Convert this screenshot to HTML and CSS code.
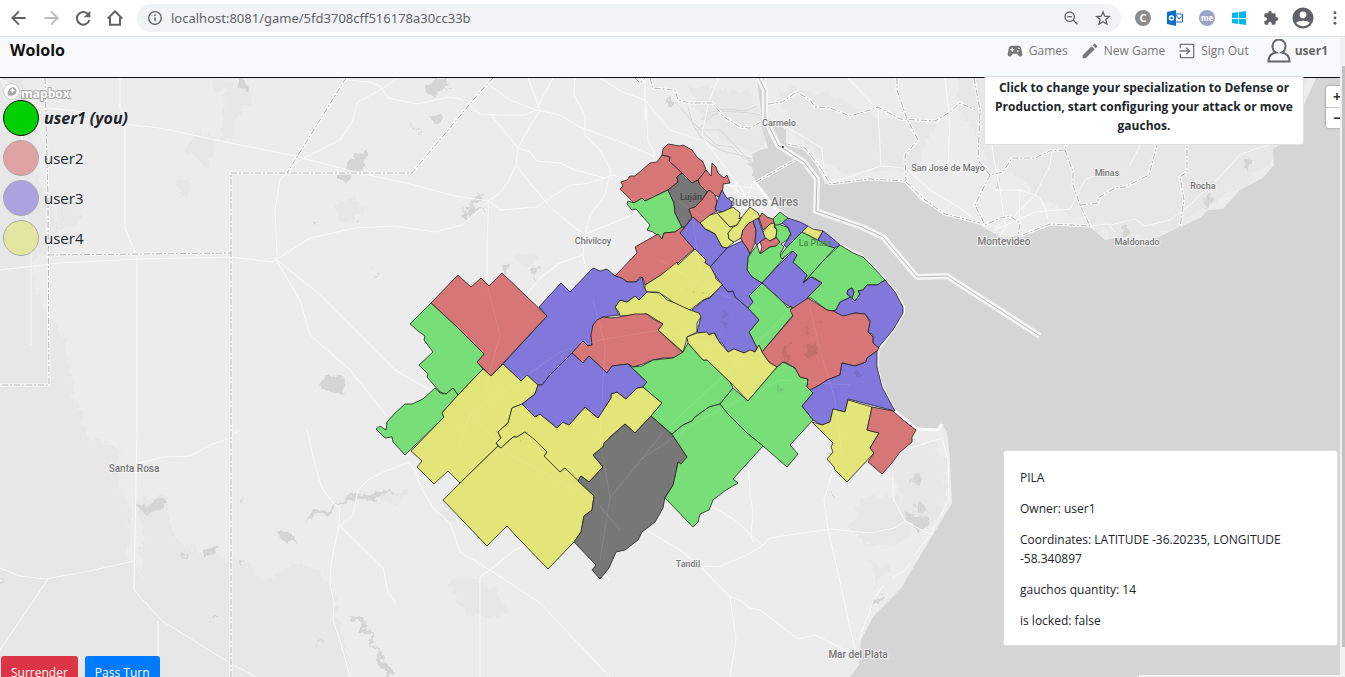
FILE: index.html
```html
<!DOCTYPE html>
<html lang="en">
<head>
<meta charset="utf-8">
<meta name="viewport" content="width=device-width, initial-scale=1">
<title>Wololo</title>
<link rel="stylesheet" href="styles.css">
</head>
<body>
<header class="toolbar">
  <div class="tool-group">
    <button class="tool" aria-label="Back"><svg viewBox="0 0 24 24"><path d="M22 12H3M12 2L2 12l10 10"/></svg></button>
    <button class="tool tool-off" aria-label="Forward"><svg viewBox="0 0 24 24"><path d="M2 12h19M12 2l10 10-10 10"/></svg></button>
    <button class="tool" aria-label="Reload"><svg viewBox="0 0 24 24"><path d="M20 7a9.500 9.500 0 1 0 1.500 8"/><path class="solid" d="M23 1v10H13z"/></svg></button>
    <button class="tool" aria-label="Home"><svg viewBox="0 0 24 24"><path d="M1 13L12 2l11 11M4.500 11v11h15V11"/></svg></button>
  </div>
  <div class="address">
    <svg class="glyph" viewBox="0 0 24 24"><circle cx="12" cy="12" r="9.500"/><path d="M12 11v6M12 6.500v2.500"/></svg>
    <input class="url" type="text" aria-label="Address" value="localhost:8081/game/5fd3708cff516178a30cc33b">
    <button class="tool" aria-label="Zoom"><svg class="glyph" viewBox="0 0 24 24"><circle cx="10" cy="10" r="7"/><path d="M15.500 15.500L21.500 21.500M6.500 10h7"/></svg></button>
    <button class="tool" aria-label="Bookmark"><svg class="glyph" viewBox="0 0 24 24"><path d="M12 3l2.600 6.300 6.900.6-5.200 4.500 1.600 6.800L12 17.600l-5.900 3.600 1.600-6.800L2.500 9.900l6.900-.6z"/></svg></button>
  </div>
  <div class="tool-group tool-end">
    <button class="badge badge-grey" aria-label="C extension">C</button>
    <button class="tool" aria-label="Outlook"><svg viewBox="0 0 16 16"><path fill="#0f6fc6" stroke="none" d="M0 2l9-2v16l-9-2z"/><path fill="#fff" stroke="#0f6fc6" stroke-width="1" d="M9 4h6.500v8H9M9 5l3 4 3.500-4"/><circle cx="4.500" cy="8" r="2" fill="none" stroke="#fff" stroke-width="1.500"/></svg></button>
    <button class="badge badge-lilac" aria-label="me extension">me</button>
    <button class="tool" aria-label="Windows"><svg viewBox="0 0 16 16"><path fill="#00b8f1" stroke="none" d="M1 3l6-1v6H1zM8 2l7-1v7H8zM1 9h6v5l-6-1zM8 9h7v6l-7-1z"/></svg></button>
    <button class="tool" aria-label="Extensions"><svg viewBox="0 0 24 24"><path class="solid" d="M20.500 11H19V7a2 2 0 0 0-2-2h-4V3.500a2.500 2.500 0 0 0-5 0V5H4a2 2 0 0 0-2 2v3.800h1.500a2.700 2.700 0 0 1 0 5.400H2V20a2 2 0 0 0 2 2h3.800v-1.500a2.700 2.700 0 0 1 5.400 0V22H17a2 2 0 0 0 2-2v-4h1.500a2.500 2.500 0 0 0 0-5z"/></svg></button>
    <button class="tool tool-user" aria-label="Profile"><svg viewBox="0 0 24 24"><circle class="solid" cx="12" cy="12" r="11.500"/><circle cx="12" cy="8.500" r="3.700" fill="#fff" stroke="none"/><path d="M4.500 17.500c2-3.500 13-3.500 15 0-3.500 4.500-11.500 4.500-15 0z" fill="#fff" stroke="none"/></svg></button>
    <button class="tool" aria-label="Menu"><svg viewBox="0 0 24 24"><g class="solid"><circle cx="12" cy="4" r="2.200"/><circle cx="12" cy="12" r="2.200"/><circle cx="12" cy="20" r="2.200"/></g></svg></button>
  </div>
</header>

<div class="window">
<div class="page">
  <nav class="navbar">
    <a class="brand" href="#">Wololo</a>
    <div class="links">
      <a class="link" href="#games"><svg viewBox="0 0 24 24"><path fill="currentColor" fill-rule="evenodd" d="M7 4h10c3 0 4 2 4.500 4.500l1.400 8c.6 3.500-2.900 5-5.400 2.500L15 16H9l-2.500 3c-2.500 2.500-6 1-5.400-2.500l1.400-8C3 6 4 4 7 4zm0 3v2H5v2h2v2h2v-2h2V9H9V7zm8 4v2h2v-2zm2-4v2h2V7z"/></svg>Games</a>
      <a class="link" href="#new"><svg viewBox="0 0 24 24"><path fill="currentColor" d="M1 18.500L14.500 5l4.500 4.500L5.500 23H1zM16 3.500l2-2q1-1 2 0l2.500 2.500q1 1 0 2l-2 2z"/></svg>New Game</a>
      <a class="link" href="#out"><svg viewBox="0 0 24 24"><path fill="none" stroke="currentColor" stroke-width="2" d="M2 8V2h20v20H2v-6M1 12h15M11 7l5 5-5 5"/></svg>Sign Out</a>
      <a class="link link-user" href="#user"><svg viewBox="0 0 24 24"><path fill="none" stroke="currentColor" stroke-width="2" d="M9 13.500C6 12 5.500 9 5.500 7a6.500 6.500 0 0 1 13 0c0 2-.5 5-3.500 6.500 5 1 7.500 4 7.500 9h-21c0-5 2.500-8 7.500-9z"/></svg><b>user1</b></a>
    </div>
  </nav>

  <main class="game">
    <svg class="map" viewBox="0 78 1340 599" preserveAspectRatio="xMinYMin slice" role="img" aria-label="Game map">
      <defs>
        <path id="east-border" d="M759 78L765 90 765 118 778 145 804 162 817 179 816 211 862 227 883 237 917 277 947 276 1040 336"/>
        <path id="province-limits" d="M231 677V173H412L480 92 493 78M346 78L287 173M45 78L48 200 49 385H0M48 255L231 253M635 78L640 83 645 78M650 78L653 88 675 90 678 100 690 103 712 103 724 117 740 127 750 128 765 120M756 182L795 160M768 104L782 102 797 92 810 100 815 107 830 108 850 116 870 110 878 107 900 119 935 121 950 112 960 103 975 110M897 78V90L907 119 918 140 905 155 906 181 870 179 830 184 822 170 805 148 787 144M974 78L980 110 978 160 984 168 990 175 1003 172 1012 158 1035 158 1050 151 1065 150 1070 130 1078 78M990 175L975 205 985 225 1000 218 1010 216 1020 223 1018 236M1065 150L1073 172 1073 185 1080 205 1090 226 1050 224 1020 236M1080 205L1098 203 1098 198 1115 188 1125 187 1149 175 1157 145 1160 78M1187 78V172L1180 177 1184 200 1180 227M906 182L925 200 945 214 980 223"/>
        <filter id="rough" x="0" y="0" width="100%" height="100%" color-interpolation-filters="sRGB">
          <feTurbulence type="fractalNoise" baseFrequency="0.09" numOctaves="3" seed="4"/>
          <feDisplacementMap in="SourceGraphic" scale="16" xChannelSelector="R" yChannelSelector="G"/>
        </filter>
      </defs>
      <rect class="land" x="0" y="78" width="1340" height="599"/>
      <g class="shade" filter="url(#rough)">
        <path d="M-20 60H20L35 110 30 160 45 200 60 225 55 250 30 260 40 300 65 340 75 400 85 435 120 450 118 480 130 510 128 560 150 590 165 620 160 640 170 700H-20z"/>
        <path d="M140 500l25-8 8 40 22 20 50 10 20 20 35-20 30 20 15 60 10 80H150z"/>
        <path d="M224 90l26-8 0 20-12 11-5 30-12 0zM195 130l20 6 0 20-8 10-20-15zM336 205l20-6 10 14-25 10zM178 180h12v18h-12zM60 205l20-6 0 25-20 4zM215 80h18v12h-18zM515 255l20-4 5 10-18 4z"/>
        <path d="M860 500l30-6 25 12 5 14-25 25-30 0-15-20zM895 450l40-10 10 20 0 50-20 20-20-25-15-30zM870 565h20l-16 22z"/>
        <path d="M780 88l60 10 40 20 25-5 30 15-20 40-60 5-30-10-30-30zM960 60H1313L1265 170 1210 205 1150 240 1110 236 1085 220 1040 200 1010 170 990 170 960 110z"/>
        <path d="M690 85l60 8 20 40-10 20-35-10-30-35zM450 580l15-6 30 18 14 18-30 8-20-10zM438 500l14 4 4 20-16-6zM385 490l22 2-8 14-16-4z"/>
      </g>
      <g filter="url(#rough)"><path class="lagoon" d="M349 158l6-6 13 1-2 12-8 8-14 7-10 0 3-5 10-3zM428 85q5-9 18-5l-3 12-13 2zM430 113l8 1 1 7-7 0zM240 82l8-1 2 8-9-1zM411 122l4 4 8 9-6-3zM463 215l8-10 7-14 2 6-5 8 10 7-10-2-8 10zM320 380l18-6 8 5-4 14-12 3-8-6zM276 532l9-2 11 8-1 7-14-6zM303 525l7-10 16-6 15-7 25-9 28-4-16 10-25 1-14 5-14 10-18 5zM206 552l8-5 4 4-10 5zM180 557l12-4-10 6zM140 507l12-8 16 2-4 8-20 4zM318 640l8 1-4 2-7-1zM350 613l15 8 8 20 10 15 12 21h-11l-9-30-15-20zM0 580l10 1-5 2zM208 620l8-4-5 6zM372 278l6-6-1 5-5 3zM502 266l6-2 1 6-6 0zM530 268l8 2-2 8-6-3zM445 88l4 0-2 2zM356 222l8-2-5 4zM312 220l6-2-2 4zM912 477l10-2-2 7-7 1zM918 502l8 4 2 10-9-4zM905 514l8-2 13 9-2 10-10-3-8-10zM834 490l3 2 1 4-4-1zM874 602l8-8-5 14-4 4zM1243 162l7-2 2 10-5 2zM1202 205l8-10 4-3-2 11-6 4zM1120 231l8-8 2 6-5 5zM994 185l6-8 2 4-6 8zM665 100l8-2 0 4-6 0zM240 500l4-2-2 4zM238 560l4-2 0 8z"/></g>
      <path class="water" d="M757 78L761 112 762 128 767 145 770 150 764 156 758 166 754 181 765 195 775 208 788 218 813 229 840 245 863 257 885 280 895 292 904 307 903 314 893 330 878 349 877 368 882 387 895 411 916 429 938 430 942 424 947 432 950 460 952 503 910 573 902 587 873 617 861 640 859 665 850 677H1340V78H1316L1304 105 1280 144 1273 150 1274 165 1263 178 1240 190 1223 209 1208 210 1200 218 1180 227 1152 240 1133 247 1118 237 1105 240 1090 227 1050 225 1020 236 1003 238 983 227 970 219 947 215 933 207 920 200 903 181 865 180 827 184 822 177 814 159 797 145 786 143 786 130 775 122 767 118 764 78z"/>
      <path class="lagoon" d="M770 148l-10 2-8 4 2 8-8 2 8 4-2 8 6 0 20-22z"/>
      <path class="delta" d="M757 106l-12 5-20-2-14 3-10 8M760 115l-10-2-25-2-12 4-14 14M750 162l-20-22-10-10-18 0-10-8-4-15M764 157l-20 2-12-12-16-2-8-8-15-14M755 178l-5-20-30-8-20-14-12-20-13-14"/>
      <g class="roads">
        <path d="M0 78L35 105 48 108 85 112 122 124 160 128 230 143 290 155 360 173 410 184 455 196 489 201 500 210 537 207 545 201 570 185 585 184 605 178 612 175 650 184"/>
        <path d="M120 78L120 108 125 117 125 228 137 257 137 430 134 590 162 621 230 663 256 677M0 78L22 119 23 190 31 250 31 345"/>
        <path d="M0 270L60 263 140 259 232 257 272 262 310 238 355 228 395 226 435 232 462 225 480 210 489 200M277 255L275 210 280 180 300 160 340 140 352 122 358 102 380 90 398 78M345 80L370 82 380 86 388 98 417 104 450 97 460 99 480 114 500 115 525 115 536 110 560 115 580 127 615 140 640 150 655 157M275 258L320 295 370 345 395 370 430 390M275 258L300 300 310 335 350 370 390 420 408 455M0 568L20 576 45 579 85 572 134 561M48 579L0 650M158 621L158 677M136 464L163 457 190 456 210 445 225 440 240 430"/>
        <path d="M307 430L315 465 322 488 332 502 340 508 339 525 334 548 331 565 330 585 334 602 333 620 340 640 350 677M340 526L353 515 358 490 368 480 383 472 400 466 408 462 415 470 420 485 433 508 450 523 460 552 490 570 540 603 610 677M340 526L383 568 388 592 396 603M490 570L515 550 545 537 565 518 595 500 610 498M490 570L480 577V677M595 500L680 550 700 566 730 597 740 600 750 608 760 610 798 639 815 635 845 650 856 653M610 498L604 570 609 580M489 200L487 240 487 285M528 78L540 110 529 128 518 148 516 165 508 182 498 195 489 200M490 85L510 100 536 110 553 78M491 115L518 148 530 152 537 161 560 163 575 170 605 178M516 165L530 183 550 207 575 228 585 234M575 78L574 95 585 115 585 135 600 150 611 170 605 195 590 215 585 234 583 255 560 263 540 278 525 296M600 78L622 92 645 100 670 130 700 140 715 150"/>
        <path d="M700 566L718 567 745 556 762 546 770 538 830 529 870 533 895 528 905 521 925 532 933 534M860 640L863 628 870 612 873 600 884 585M892 578L905 570 911 563M833 470L824 500 828 530 834 555 855 650M748 450L750 495 753 510 751 537 754 542M763 546L735 520 710 505M893 470L893 498 905 521M906 450L920 445 942 438 948 460 949 500 930 535 915 555M730 597L736 640 730 677M645 78L645 120"/>
        <path d="M718 78L708 105 702 135 712 150 745 195M646 105L648 140 655 155M585 234L620 220 650 207M593 300L583 255M848 78L878 110 881 166M945 78L950 120 948 165M775 120L800 135 822 148 825 184M828 184L881 166 905 168M908 170L930 190 960 208 983 225M995 190H1020L1040 197 1046 210 1048 220M990 115L993 155 1000 190 1005 225M1020 190L1019 230M995 230L1035 212 1070 209 1085 180 1108 170M1130 165L1140 145M1110 225L1135 219 1145 226 1170 220 1190 205 1205 190M1215 182L1240 155 1255 149 1270 145M995 228L1010 216M1000 235L1015 215 1035 195 1050 165 1052 150M1090 226L1108 224 1115 232"/>
        <path d="M730 210L770 205M735 192L765 212M742 188L748 208M752 184L745 205M725 185L755 188M720 178L750 200M735 180L740 205"/>
      </g>
      <path class="coast" d="M754 181L765 195 775 208 788 218 813 229 840 245 863 257 885 280 895 292 904 307 903 314 893 330 878 349 877 368 882 387 895 411 916 429 938 430 942 424"/>
      <use class="casing" href="#east-border"/>
      <use class="center" href="#east-border"/>
      <use class="limit-halo" href="#province-limits"/>
      <use class="limit" href="#province-limits"/>
      <g class="towns">
        <text x="779" y="126">Carmelo</text>
        <text x="948" y="171">San José de Mayo</text>
        <text x="1107" y="176">Minas</text>
        <text x="1203" y="189">Rocha</text>
        <text x="1137" y="245">Maldonado</text>
        <text x="593" y="244">Chivilcoy</text>
        <text x="688" y="567">Tandil</text>
        <text class="city" x="1004" y="245">Montevideo</text>
        <text class="city" x="134" y="472">Santa Rosa</text>
        <text class="city" x="858" y="658">Mar del Plata</text>
        <text class="capital" x="763" y="206">Buenos Aires</text>
      </g>
      <g class="regions">
        <path class="red" d="M662 155L663 149 668 144 680 146 683 145 692 150 697 157 703 162 706 170 703 174 698 180 692 183 682 173 669 161 670 157z"/>
        <path class="red" d="M662 155L657 162 650 163 642 170 635 176 630 176 627 180 621 182 623 186 620 189 634 203 642 198 645 201 668 190 678 182 677 177 682 173 669 161 670 157z"/>
        <path class="green" d="M634 203L628 201 627 204 632 210 636 209 650 225 647 230 653 232 662 239 664 233 675 232 682 227 675 213 674 203 668 190 645 201 642 198z"/>
        <path class="grey" d="M682 173L692 183 698 180 700 185 707 192 702 200 695 207 689 209 692 217 685 227 682 227 675 213 674 203 668 190 678 182 677 177z"/>
        <path class="red" d="M706 170L711 176 712 163 716 167 718 173 724 178 727 175 730 183 723 184 723 188 719 197 715 195 709 190 707 192 700 185 698 180 703 174z"/>
        <path class="red" d="M709 190L715 195 717 202 715 208 717 211 710 215 704 222 700 223 692 217 689 209 695 207 702 200z"/>
        <path class="purple" d="M722 190L726 197 732 202 731 208 722 212 715 210 717 202 719 197z"/>
        <path class="yellow" d="M717 213L730 227 737 225 728 233 729 239 734 242 727 248 722 247 717 238 715 234 710 231 705 229 700 223 710 215z"/>
        <path class="yellow" d="M717 213L722 212 733 207 740 213 739 219 742 217 737 225 730 227z"/>
        <path class="yellow" d="M750 207L758 213 760 217 753 222 749 223 743 230 741 238 734 242 729 239 728 233 733 227 737 225 742 217z"/>
        <path class="red" d="M753 221L756 230 755 243 750 254 747 248 743 243 741 238 743 230 749 223z"/>
        <path class="purple" d="M753 221L758 218 762 230 766 238 760 242 757 245 755 243 756 230z"/>
        <path class="red" d="M762 213L767 217 773 219 776 223 767 227 763 230 759 218z"/>
        <path class="yellow" d="M767 227L770 224 775 223 774 227 777 230 776 237 770 241 766 240 763 232z"/>
        <path class="red" d="M766 238L770 241 777 237 780 243 776 246 770 247 760 254 762 247 760 242z"/>
        <path class="green" d="M748 257L757 245 760 254 770 247 776 246 780 242 776 237 777 230 774 225 778 224 787 227 791 233 787 240 781 244 784 247 780 254 784 258 762 283 752 277 747 270z"/>
        <path class="green" d="M780 212L788 218 785 222 778 225 775 225 773 219z"/>
        <path class="purple" d="M788 218L800 222 808 226 797 237 787 248 784 245 791 235 788 227 782 223z"/>
        <path class="green" d="M802 232L818 240 835 248 823 261 808 278 803 283 807 275 793 262 797 255 792 251 782 259 780 256 787 247z"/>
        <path class="yellow" d="M808 226L813 229 823 231 820 236 818 240 802 232z"/>
        <path class="purple" d="M823 231L832 238 840 245 835 248 828 246 818 240z"/>
        <path class="green" d="M840 245L853 253 863 257 873 267 885 280 877 285 867 285 863 290 858 291 860 294 855 301 852 298 854 292 852 288 848 290 847 294 851 297 840 302 836 310 833 311 827 310 811 298 807 298 822 283 813 277 803 283 808 278 823 261z"/>
        <path class="purple" d="M885 280L895 292 903 307 903 313 893 330 878 348 873 343 873 335 868 332 870 320 865 314 855 313 843 317 833 311 836 310 840 302 851 297 847 294 848 290 852 288 854 292 852 298 855 301 860 294 858 291 863 290 867 285 877 285z"/>
        <path class="purple" d="M793 251L797 255 793 262 807 275 803 283 811 277 822 283 807 298 804 302 795 308 790 307 783 302 762 283 778 266z"/>
        <path class="green" d="M762 283L783 302 788 308 791 306 793 315 762 352 759 346 757 348 749 332 759 320 747 307 753 302 749 296z"/>
        <path class="purple" d="M742 241L747 248 750 254 748 257 747 270 752 277 762 283 749 296 753 302 748 308 735 297 733 291 728 292 722 285 715 275 710 267 727 248z"/>
        <path class="purple" d="M693 217L700 223 705 229 715 234 722 247 727 248 710 267 700 257 694 249 680 233z"/>
        <path class="red" d="M682 227L684 228 680 233 694 249 678 263 661 275 645 285 643 278 640 277 636 282 628 282 615 276 637 253 635 247 658 234 662 239 664 233 675 232z"/>
        <path class="yellow" d="M695 249L706 260 705 263 710 266 715 275 716 279 723 285 710 297 703 300 690 310 677 305 663 295 657 292 645 292 645 285 661 275 677 262 678 265z"/>
        <path class="purple" d="M722 285L728 292 733 291 735 297 748 308 759 320 749 332 757 348 755 352 750 350 744 353 734 349 728 352 722 343 719 343 715 333 707 335 697 332 701 317 692 310 704 300 710 298z"/>
        <path class="yellow" d="M647 292L660 293 667 300 675 303 690 310 699 313 701 317 697 323 697 332 687 337 686 342 683 352 658 330 663 324 647 314 635 315 620 316 619 312 615 307 620 300 627 302 635 296 639 300z"/>
        <path class="purple" d="M593 268L600 271 607 269 615 276 622 278 627 282 636 282 642 277 644 287 647 292 639 300 635 296 627 302 620 300 615 307 619 315 603 317 593 325 592 345 588 346 583 341 572 353 550 375 542 385 538 385 527 375 521 381 503 364 547 316 539 307 561 283 570 292z"/>
        <path class="red" d="M572 353L583 341 588 346 592 345 591 335 593 325 597 320 603 317 611 318 619 317 635 314 647 314 653 319 663 324 658 330 683 353 673 358 663 358 653 360 643 364 633 367 628 364 612 366 607 373 589 356 583 363z"/>
        <path class="red" d="M458 275L471 287 481 278 489 286 502 273 547 316 491 376 477 362 484 354 458 328 431 303z"/>
        <path class="green" d="M431 303L458 328 484 354 477 362 483 369 458 395 453 388 446 394 440 392 427 377 428 374 419 365 433 352 424 340 425 336 418 331 410 324z"/>
        <path class="green" d="M435 388L440 393 446 394 453 388 458 395 442 413 444 417 405 455 393 442 392 437 385 438 376 429 380 426 386 430 387 422 395 413 405 404 412 404 423 399z"/>
        <path class="yellow" d="M503 364L521 381 527 375 538 385 535 394 522 404 512 408 508 423 498 432 501 438 496 443 498 446 460 483 448 471 434 484 417 467 422 461 411 451 444 417 442 413 458 395 483 369 491 376z"/>
        <path class="yellow" d="M522 404L535 417 540 414 557 428 563 422 569 425 585 407 598 418 611 398 611 394 617 392 626 399 637 388 643 387 662 403 651 416 635 433 625 424 610 437 603 447 593 455 603 467 589 482 581 476 578 481 565 468 560 472 544 456 547 452 525 432 517 437 513 437 501 448 496 443 501 438 498 432 508 423 512 408z"/>
        <path class="purple" d="M572 353L583 363 589 356 607 373 612 366 628 364 647 382 643 387 637 388 626 399 617 392 611 394 611 398 598 418 585 407 569 425 563 422 557 428 540 414 535 417 522 404 535 394 538 385 542 385 550 375z"/>
        <path class="yellow" d="M525 432L535 440 547 452 544 456 560 472 565 468 594 496 592 510 584 516 581 532 574 542 548 569 517 537 507 526 487 546 443 500 460 483 498 446 501 448 513 437 517 437z"/>
        <path class="green" d="M628 364L633 367 642 366 653 360 673 358 683 352 688 343 703 360 707 360 730 382 733 388 720 404 709 407 695 417 692 421 683 425 672 434 651 416 662 403 643 387 647 382z"/>
        <path class="yellow" d="M687 337L697 333 707 332 709 335 714 333 720 343 728 352 734 349 744 353 750 350 755 352 759 345 762 352 769 362 777 367 748 401 731 383 707 360 703 360 688 343z"/>
        <path class="green" d="M733 388L748 401 777 367 783 362 795 368 800 377 808 379 807 387 813 393 802 406 813 420 790 445 798 454 787 467 763 446 747 433 727 413 720 404z"/>
        <path class="green" d="M720 404L727 413 747 433 763 446 733 479 738 483 726 490 713 500 709 510 700 514 698 522 693 527 665 498 673 485 678 462 687 457 677 442 672 434 683 425 692 421 695 417 709 407z"/>
        <path class="grey" d="M651 416L672 435 677 442 687 457 681 464 678 462 673 485 665 497 663 508 655 522 642 532 638 540 625 550 616 552 609 568 600 579 592 570 596 565 574 542 581 532 584 516 592 510 594 496 578 481 581 476 589 482 603 467 593 455 603 447 604 443 625 424 635 433z"/>
        <path class="red" d="M808 298L827 310 833 311 843 316 855 313 865 314 870 322 868 332 873 337 873 343 879 348 877 351 867 358 866 362 855 366 842 363 840 375 827 380 818 386 810 390 807 387 808 379 800 377 795 368 785 362 783 362 777 367 769 362 762 352 793 316 790 310z"/>
        <path class="purple" d="M877 351L877 367 882 387 888 398 895 411 848 399 845 412 833 409 830 422 822 425 818 423 813 420 802 406 813 393 810 390 818 386 827 380 840 375 842 363 855 366 866 362 867 358z"/>
        <path class="yellow" d="M848 400L872 407 867 430 879 433 870 448 874 453 860 468 847 482 835 470 834 467 827 459 833 452 831 447 833 443 812 422 822 425 830 422 833 409 845 412z"/>
        <path class="red" d="M872 407L893 411 903 420 916 430 912 437 912 442 900 452 892 463 882 474 868 462 874 453 870 448 879 433 867 430z"/>
      </g>
      <path class="region-lakes" filter="url(#rough)" d="M785 351l4-7 2 5-4 12-5 0zM804 350l6-9 2 5 6-8 0 16-8 5zM805 325l4 4-3 8zM817 320l5 2-2 6zM720 315l6-3-2 8-4 0zM722 322l8 2-4 6zM853 369l10 3-7 3zM776 387l8-2 0 4-6 2zM518 440l8-2-6 4zM686 290l5-2 0 4zM702 294l6 0-3 4zM542 359l6-2-2 4z"/>
      <g class="region-roads">
        <path d="M458 445L471 413 520 380 560 352 600 340 660 330 730 350M471 413L510 455 595 500 620 530M487 285L500 335 485 390M593 300L605 345 600 440 610 498 600 560M610 498L665 430 740 360 790 310M640 460L700 420 780 380 850 385M808 300L820 350 835 400 842 455M660 260L710 290 760 310M690 200L700 270M620 200L670 195 720 230"/>
      </g>
      <g class="inner-towns">
        <text x="691" y="200">Luján</text>
        <text class="muted" x="815" y="246">La Plata</text>
      </g>
      <circle cx="783" cy="147" r="1" fill="#333"/>
    </svg>

    <section class="legend" aria-label="Players">
      <div class="mapbox"><svg viewBox="0 0 18 18"><circle cx="9" cy="9" r="8" fill="#fff" stroke="#aaa" stroke-width="1"/><path fill="#aaa" d="M5 13c-1-8 7-11 9-6s-4 8-9 6z"/><path fill="#fff" d="M10 5l1 2 2 1-2 1-1 2-1-2-2-1 2-1z"/></svg><span>mapbox</span></div>
      <ul class="players">
        <li class="player player-me"><i class="dot dot-green"></i>user1 (you)</li>
        <li class="player"><i class="dot dot-red"></i>user2</li>
        <li class="player"><i class="dot dot-purple"></i>user3</li>
        <li class="player"><i class="dot dot-yellow"></i>user4</li>
      </ul>
    </section>

    <div class="zoomer"><button aria-label="Zoom in">+</button><button aria-label="Zoom out">−</button></div>
    <p class="notice">Click to change your specialization to Defense or Production, start configuring your attack or move gauchos.</p>

    <section class="details">
      <p>PILA</p>
      <p>Owner: user1</p>
      <p>Coordinates: LATITUDE -36.20235, LONGITUDE -58.340897</p>
      <p>gauchos quantity: 14</p>
      <p>is locked: false</p>
    </section>

    <div class="actions">
      <button class="btn btn-danger">Surrender</button>
      <button class="btn btn-primary">Pass Turn</button>
    </div>
  </main>
  <div class="bar-x"></div>
</div>
<div class="bar-y"><div class="thumb"></div></div>
</div>
</body>
</html>
```
FILE: styles.css
```css
* { box-sizing: border-box; }

body {
  margin: 0;
  height: 100vh;
  display: flex;
  flex-direction: column;
  overflow: hidden;
  font-family: "Open Sans", "Noto Sans", sans-serif;
  color: #212529;
}

button { font: inherit; border: 0; padding: 0; background: none; }

/* browser toolbar */
.toolbar {
  display: flex;
  align-items: center;
  height: 37px;
  padding: 0 2px 0 11px;
  border-bottom: 1px solid #dadce0;
  background: #fff;
}
.tool-group { display: flex; align-items: center; gap: 16px; }
.tool { display: flex; color: #5f6368; }
.tool svg, .glyph {
  width: 16px;
  height: 16px;
  fill: none;
  stroke: #5f6368;
  stroke-width: 3;
}
.tool .glyph, .glyph { stroke-width: 2; }
.tool-off svg { stroke: #babcbe; }
.solid { fill: #5f6368; stroke: none; }
.tool-user { margin: 0 -3px; }
.tool-user svg { width: 22px; height: 22px; }
.address {
  flex: 1;
  display: flex;
  align-items: center;
  gap: 16px;
  height: 28px;
  margin-left: 14px;
  padding: 0 10px;
  border-radius: 14px;
  background: #f1f3f4;
}
.url {
  flex: 1;
  margin-left: -8px;
  border: 0;
  padding: 0;
  background: none;
  font-family: "Noto Sans", sans-serif;
  font-size: 13px;
  color: #5f6368;
}
.tool-end { margin-left: 14px; }
.badge {
  width: 16px;
  height: 16px;
  border-radius: 50%;
  color: #fff;
  font-size: 8px;
  font-weight: 700;
  line-height: 16px;
}
.badge-grey { background: #8c8c8c; font-size: 11px; }
.badge-lilac { background: #9ba3c9; }

/* page window */
.window { flex: 1; display: flex; min-height: 0; }
.page {
  flex: 1;
  min-width: 0;
  display: flex;
  flex-direction: column;
  position: relative;
  overflow: hidden;
}
.bar-y { width: 5px; padding: 29px 0 30px 2px; background: #f1f1f1; }
.thumb { height: 100%; background: #c1c1c1; }
.bar-x {
  position: absolute;
  right: 0;
  bottom: 0;
  width: 15%;
  height: 2px;
  background: #f1f1f1;
}

/* site navigation */
.navbar {
  display: flex;
  justify-content: space-between;
  height: 41px;
  padding: 0 12px 0 10px;
  border-bottom: 1px solid #111;
  background: #f8f9fa;
}
.brand {
  font-size: 16px;
  font-weight: 700;
  line-height: 27px;
  color: #111;
  text-decoration: none;
}
.links { display: flex; gap: 14px; height: 27px; align-items: center; }
.link {
  display: flex;
  align-items: center;
  gap: 6px;
  font-size: 12px;
  color: #777;
  text-decoration: none;
}
.link svg { width: 16px; height: 16px; }
.link-user { gap: 4px; margin-left: 4px; color: #666; }
.link-user svg { width: 24px; height: 24px; }

/* map */
.game { position: relative; flex: 1; min-height: 0; }
.map { display: block; width: 100%; height: 100%; background: #d5d5d5; }
.land { fill: #ececec; }
.water, .lagoon { fill: #d5d5d5; }
.shade { fill: #e7e7e7; }
.delta { fill: none; stroke: #d8d8d8; stroke-width: 1; }
.roads { fill: none; stroke: #fafafa; stroke-width: 1; }
.coast { fill: none; stroke: #fafafa; stroke-width: 3; }
.casing { fill: none; stroke: #f4f4f4; stroke-width: 6; }
.center { fill: none; stroke: #bbb; stroke-width: 1; }
.limit-halo { fill: none; stroke: #f8f8f8; stroke-width: 3; }
.limit { fill: none; stroke: #b4b4b4; stroke-width: 1; stroke-dasharray: 6 2 2 2; }
.regions path { stroke: #222; stroke-opacity: .8; stroke-width: 1; stroke-linejoin: round; }
.red { fill: #d67676; }
.green { fill: #78df78; }
.purple { fill: #8278db; }
.yellow { fill: #e2e678; }
.grey { fill: #777; }
.region-lakes { fill: #000; opacity: .07; }
.region-roads { fill: none; stroke: #fff; stroke-width: 1; opacity: .1; }
.towns, .inner-towns {
  font-family: Roboto, sans-serif;
  font-size: 9px;
  font-weight: 500;
  text-anchor: middle;
  fill: #777;
}
.towns { stroke: #f2f2f2; stroke-width: 2; paint-order: stroke; }
.city { font-size: 10px; }
.capital { font-size: 12px; }
.inner-towns { fill: #444; }
.muted { fill: #4c8f4c; }

/* overlays on the map */
.legend { position: absolute; left: 3px; top: 7px; }
.mapbox {
  display: flex;
  align-items: center;
  gap: 1px;
  height: 13px;
  font-size: 12px;
  font-weight: 700;
  color: #fff;
  -webkit-text-stroke: 2px #aaa;
  paint-order: stroke;
}
.mapbox svg { width: 17px; height: 17px; }
.mapbox span { padding-top: 3px; }
.players { list-style: none; margin: 0; padding: 0; }
.player {
  display: flex;
  align-items: center;
  gap: 5px;
  height: 40px;
  font-size: 15px;
}
.player-me { font-size: 16px; font-weight: 700; font-style: italic; }
.dot { width: 36px; height: 36px; border: 1px solid #aaa; border-radius: 50%; }
.dot-green { background: #00d000; border-color: #111; }
.dot-red { background: #dfa3a3; }
.dot-purple { background: #aaa3df; }
.dot-yellow { background: #e3e6a1; }

.zoomer {
  position: absolute;
  top: 8px;
  right: -8px;
  width: 22px;
  display: flex;
  flex-direction: column;
  border-radius: 3px;
  background: #fff;
  box-shadow: 0 0 3px #888;
}
.zoomer button { height: 21px; font-size: 14px; font-weight: 700; line-height: 20px; color: #333; }
.zoomer button + button { border-top: 1px solid #ccc; }

.notice, .details {
  position: absolute;
  margin: 0;
  border: 1px solid #dfdfdf;
  border-radius: 3px;
  background: #fff;
  line-height: 19px;
}
.notice {
  top: -2px;
  right: 36px;
  width: 320px;
  padding: 1px 8px 9px;
  font-size: 12px;
  font-weight: 700;
  text-align: center;
}
.details {
  right: 2px;
  bottom: 31px;
  width: 335px;
  display: flex;
  flex-direction: column;
  gap: 12px;
  padding: 17px 40px 15px 16px;
  font-size: 12px;
}
.details p { margin: 0; }

.actions { position: absolute; left: 1px; bottom: -11px; display: flex; gap: 7px; }
.btn { height: 32px; padding: 0 10px; border-radius: 3px; font-size: 12px; color: #fff; }
.btn-danger { background: #dc3545; }
.btn-primary { background: #007bff; }
```
